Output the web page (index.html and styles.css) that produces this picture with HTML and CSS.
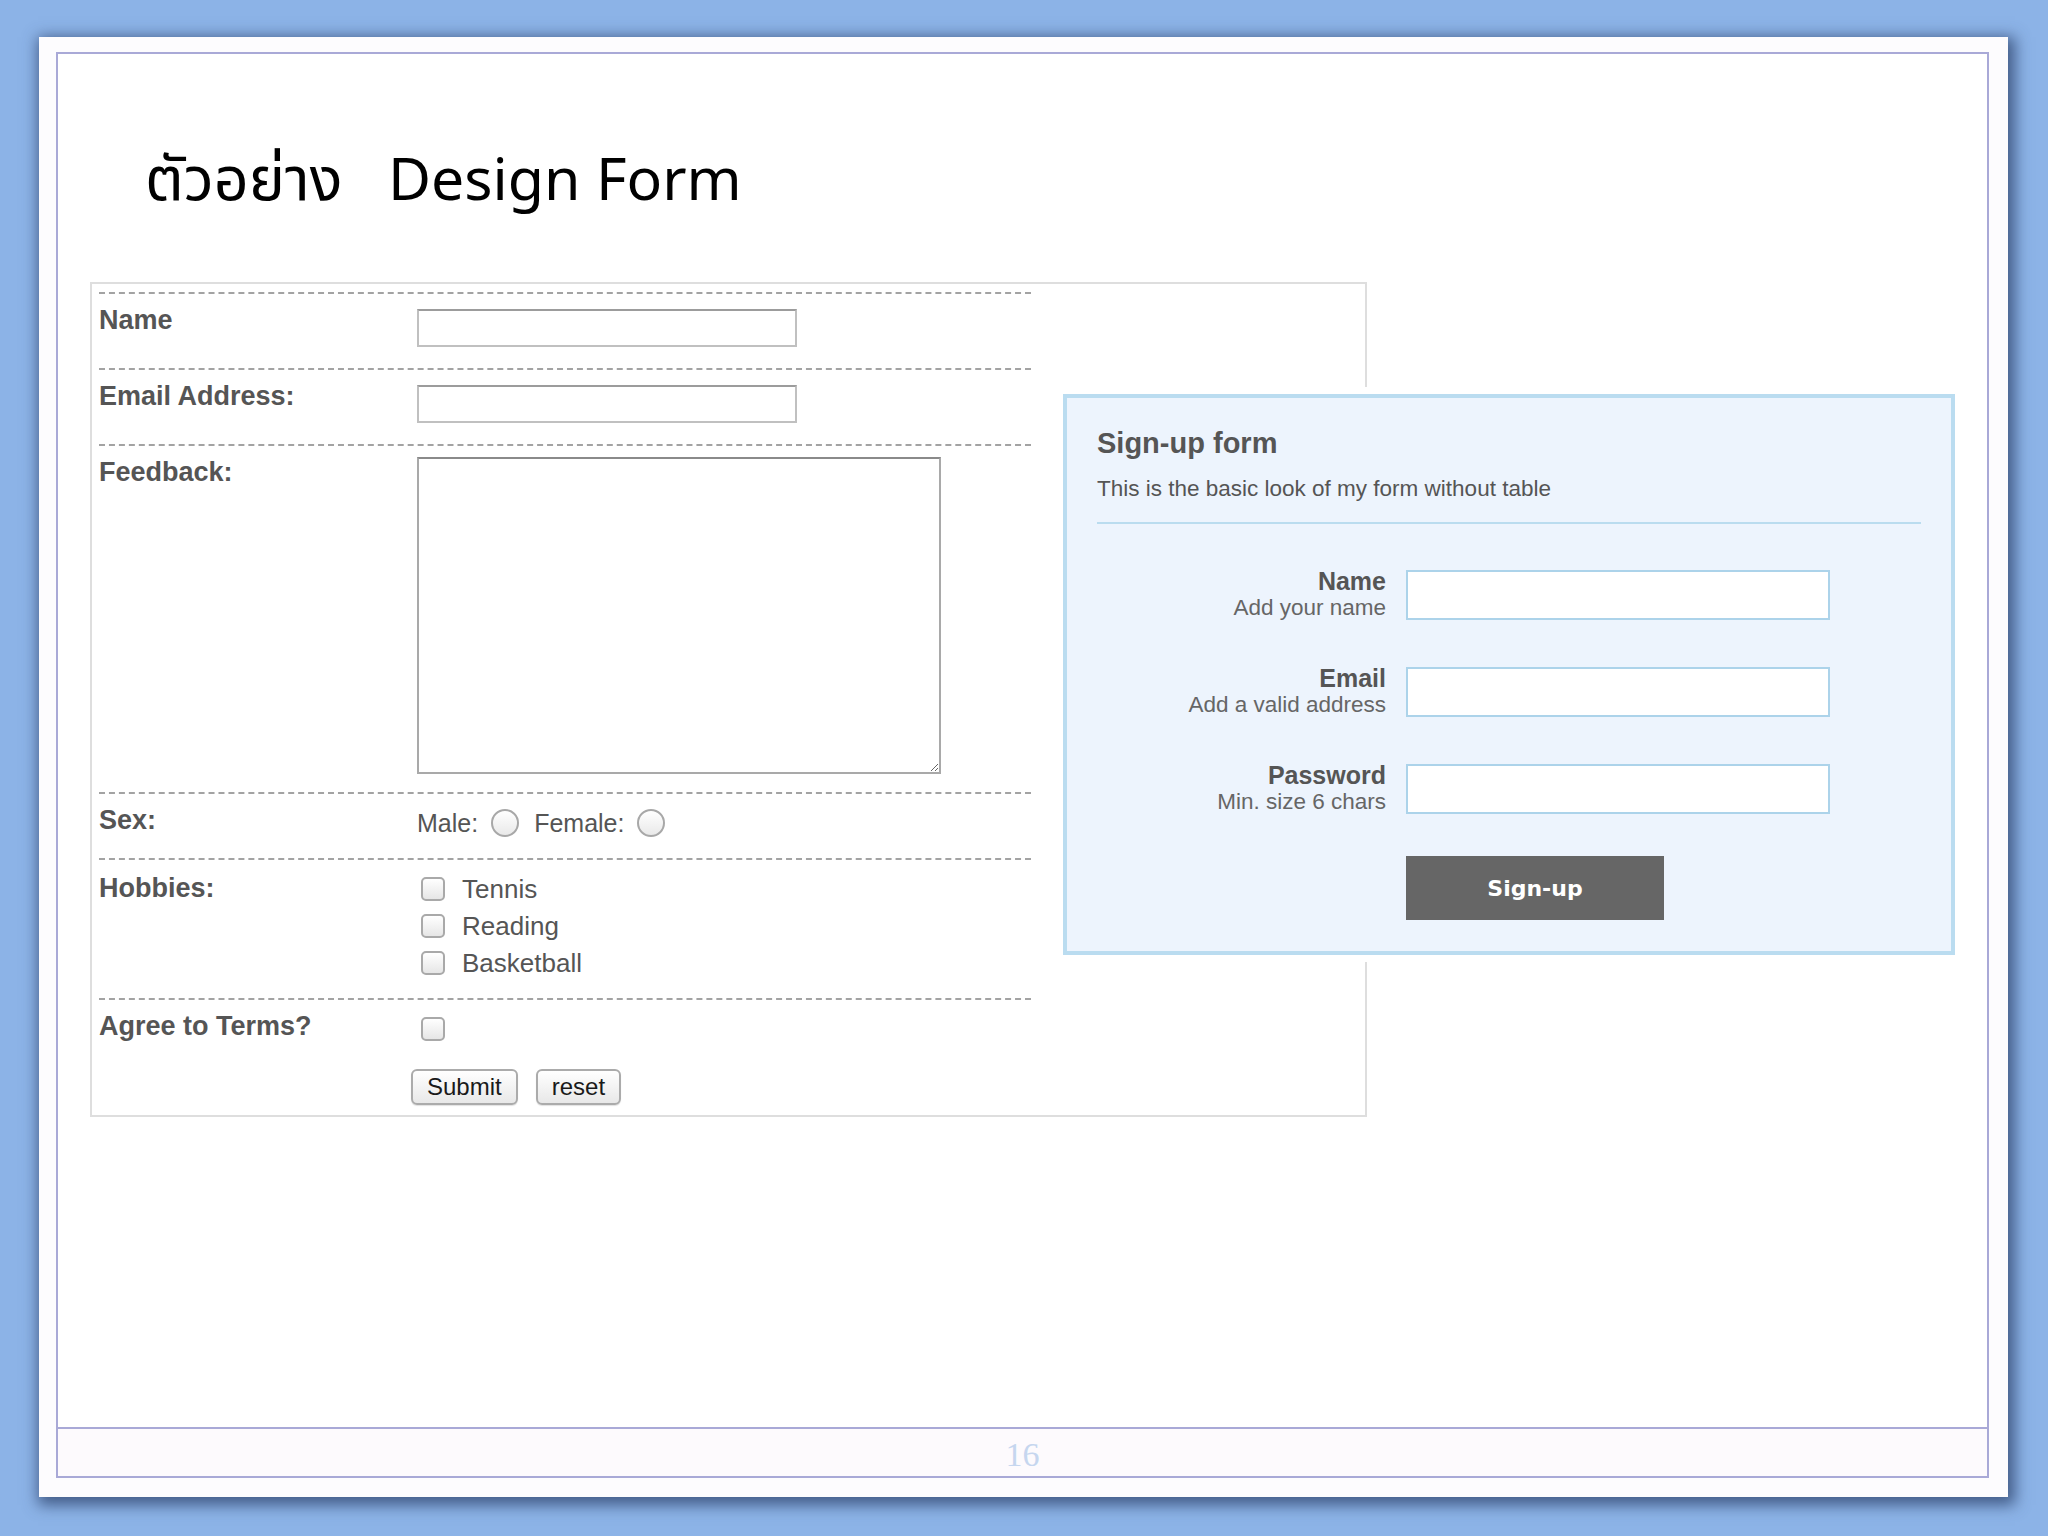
FILE: index.html
```html
<!DOCTYPE html>
<html lang="th">
<head>
<meta charset="utf-8">
<title>ตัวอย่าง Design Form</title>
<link rel="stylesheet" href="styles.css">
</head>
<body>
<div class="slide">
  <div class="frame">
    <div class="main">
      <h1 class="title"><span class="th">ตัวอย่าง</span><span class="en">Design Form</span></h1>

      <form class="classic">
        <div class="row">
          <label class="lbl">Name</label>
          <div class="field"><input class="txt" type="text"></div>
        </div>
        <div class="row">
          <label class="lbl">Email Address:</label>
          <div class="field"><input class="txt" type="text"></div>
        </div>
        <div class="row">
          <label class="lbl">Feedback:</label>
          <div class="field"><textarea class="area"></textarea></div>
        </div>
        <div class="row">
          <label class="lbl">Sex:</label>
          <div class="field inline">
            <span class="opt-text">Male:</span><input class="radio" type="radio" name="sex">
            <span class="opt-text">Female:</span><input class="radio" type="radio" name="sex">
          </div>
        </div>
        <div class="row row-list">
          <label class="lbl">Hobbies:</label>
          <div class="field checks">
            <label class="check-item"><input class="check" type="checkbox"><span>Tennis</span></label>
            <label class="check-item"><input class="check" type="checkbox"><span>Reading</span></label>
            <label class="check-item"><input class="check" type="checkbox"><span>Basketball</span></label>
          </div>
        </div>
        <div class="row row-last">
          <label class="lbl lbl-agree">Agree to Terms?</label>
          <div class="field"><input class="check" type="checkbox"></div>
          <div class="actions">
            <button class="btn" type="button">Submit</button>
            <button class="btn" type="button">reset</button>
          </div>
        </div>
      </form>

      <form class="signup">
        <h2 class="su-title">Sign-up form</h2>
        <p class="su-sub">This is the basic look of my form without table</p>
        <div class="su-sep"></div>
        <div class="su-rows">
          <div class="su-lab"><b>Name</b><small>Add your name</small></div>
          <input class="su-in" type="text">
          <div class="su-lab"><b>Email</b><small>Add a valid address</small></div>
          <input class="su-in" type="text">
          <div class="su-lab"><b>Password</b><small>Min. size 6 chars</small></div>
          <input class="su-in" type="password">
        </div>
        <button class="su-btn" type="button">Sign-up</button>
      </form>
    </div>
    <div class="footer">16</div>
  </div>
</div>
</body>
</html>
```

FILE: styles.css
```css
html, body {
  margin: 0;
  padding: 0;
}
body {
  width: 2048px;
  height: 1536px;
  overflow: hidden;
  background: #8cb3e7;
  font-family: "Liberation Sans", Arial, sans-serif;
}

.slide {
  box-sizing: border-box;
  width: 1969px;
  height: 1460px;
  margin: 37px 0 0 39px;
  padding: 15px 19px 19px 17px;
  background: #fdfcfe;
  box-shadow: 3px 4px 14px 4px rgba(35, 55, 95, 0.7);
}

.frame {
  box-sizing: border-box;
  height: 100%;
  border: 2px solid #a9a9d7;
  display: flex;
  flex-direction: column;
  background: #fff;
}

.main {
  flex: 1;
  position: relative;
}

.footer {
  box-sizing: border-box;
  height: 49px;
  border-top: 2px solid #a9a9d7;
  padding-top: 5px;
  background: #fdfafd;
  text-align: center;
  font: 34px/42px "Liberation Serif", "Times New Roman", serif;
  color: #c6d6ef;
}

/* title */
.title {
  margin: 83px 0 0 87px;
  font: 400 59px/80px "Noto Sans", "Noto Sans Thai", "Noto Sans Thai UI", "Loma", "Garuda", "Tlwg Typo", sans-serif;
  color: #000;
  white-space: nowrap;
}
.title .th {
  display: inline-block;
  min-width: 243px;
  font-size: 61px;
}

/* classic form */
.classic {
  box-sizing: border-box;
  width: 1277px;
  height: 835px;
  margin: 65px 0 0 32px;
  border: 2px solid #dedede;
  padding: 8px 0 0 7px;
}

.row {
  width: 932px;
  border-top: 2px dashed #a3a3a3;
  display: grid;
  grid-template-columns: 318px 1fr;
  padding: 15px 0 21px;
}
.row-list {
  padding: 17px 0 23px;
}
.row-last {
  padding: 17px 0 0;
  row-gap: 28px;
}

.lbl {
  font: bold 27px/22px "Liberation Sans", Arial, sans-serif;
  color: #555;
}
.lbl-agree {
  margin-top: -2px;
}

.txt {
  display: block;
  box-sizing: border-box;
  width: 380px;
  height: 38px;
  margin: 0;
  padding: 0 6px;
  border: 2px solid #c0c0c0;
  border-top-color: #9c9c9c;
  background: #fff;
}

.area {
  display: block;
  box-sizing: border-box;
  width: 524px;
  height: 317px;
  margin: -4px 0 -3px;
  border: 2px solid #a9a9a9;
  border-top-color: #8a8a8a;
  background: #fff;
  resize: both;
}

.inline {
  display: flex;
  align-items: center;
  height: 28px;
  font: 25px "Liberation Sans", Arial, sans-serif;
  color: #555;
}
.opt-text {
  margin-right: 13px;
}
.radio {
  appearance: none;
  -webkit-appearance: none;
  box-sizing: border-box;
  width: 28px;
  height: 28px;
  margin: 0 15px 0 0;
  border: 2px solid #a8a8a8;
  border-radius: 50%;
  background: linear-gradient(#ffffff, #e9e9e9);
}

.checks {
  display: flex;
  flex-direction: column;
  gap: 13px;
}
.check-item {
  display: flex;
  align-items: center;
  height: 24px;
  font: 26px "Liberation Sans", Arial, sans-serif;
  color: #555;
}
.check {
  appearance: none;
  -webkit-appearance: none;
  box-sizing: border-box;
  width: 24px;
  height: 24px;
  margin: 0 17px 0 4px;
  border: 2px solid #a9a9a9;
  border-radius: 5px;
  background: linear-gradient(#ffffff, #e6e6e6);
  display: block;
}

.actions {
  grid-column: 2;
  margin-left: -6px;
  display: flex;
  gap: 18px;
}
.btn {
  box-sizing: border-box;
  height: 36px;
  padding: 0 14px;
  font: 24px "Liberation Sans", Arial, sans-serif;
  color: #1a1a1a;
  border: 2px solid #ababab;
  border-radius: 6px;
  background: linear-gradient(#ffffff, #e8e8e8);
  box-shadow: 0 1px 1px rgba(0, 0, 0, 0.12);
}

/* sign-up form */
.signup {
  position: absolute;
  left: 1005px;
  top: 340px;
  box-sizing: border-box;
  width: 892px;
  height: 561px;
  border: 4px solid #badcf0;
  background: #edf4fd;
  box-shadow: 0 0 0 7px #fff;
  padding: 29px 30px 0;
}
.su-title {
  margin: 0;
  font: bold 29px/32px "Liberation Sans", Arial, sans-serif;
  color: #555;
}
.su-sub {
  margin: 17px 0 0;
  font: 22.5px/26px "Liberation Sans", Arial, sans-serif;
  color: #555;
}
.su-sep {
  height: 2px;
  margin-top: 20px;
  background: #badcef;
}
.su-rows {
  margin-top: 46px;
  display: grid;
  grid-template-columns: 289px 424px;
  grid-auto-rows: 50px;
  column-gap: 20px;
  row-gap: 47px;
}
.su-lab {
  text-align: right;
  color: #555;
}
.su-lab b {
  display: block;
  font: bold 25px/22px "Liberation Sans", Arial, sans-serif;
  color: #555;
}
.su-lab small {
  display: block;
  margin-top: 4px;
  font: 22.5px/24px "Liberation Sans", Arial, sans-serif;
  color: #666;
}
.su-in {
  box-sizing: border-box;
  width: 424px;
  height: 50px;
  margin: 0;
  border: 2px solid #acd3ea;
  background: #fff;
}
.su-btn {
  display: block;
  width: 258px;
  height: 64px;
  margin: 42px 0 0 309px;
  border: 0;
  background: #666;
  color: #fff;
  font: bold 22px "DejaVu Sans", "Liberation Sans", sans-serif;
}
```
